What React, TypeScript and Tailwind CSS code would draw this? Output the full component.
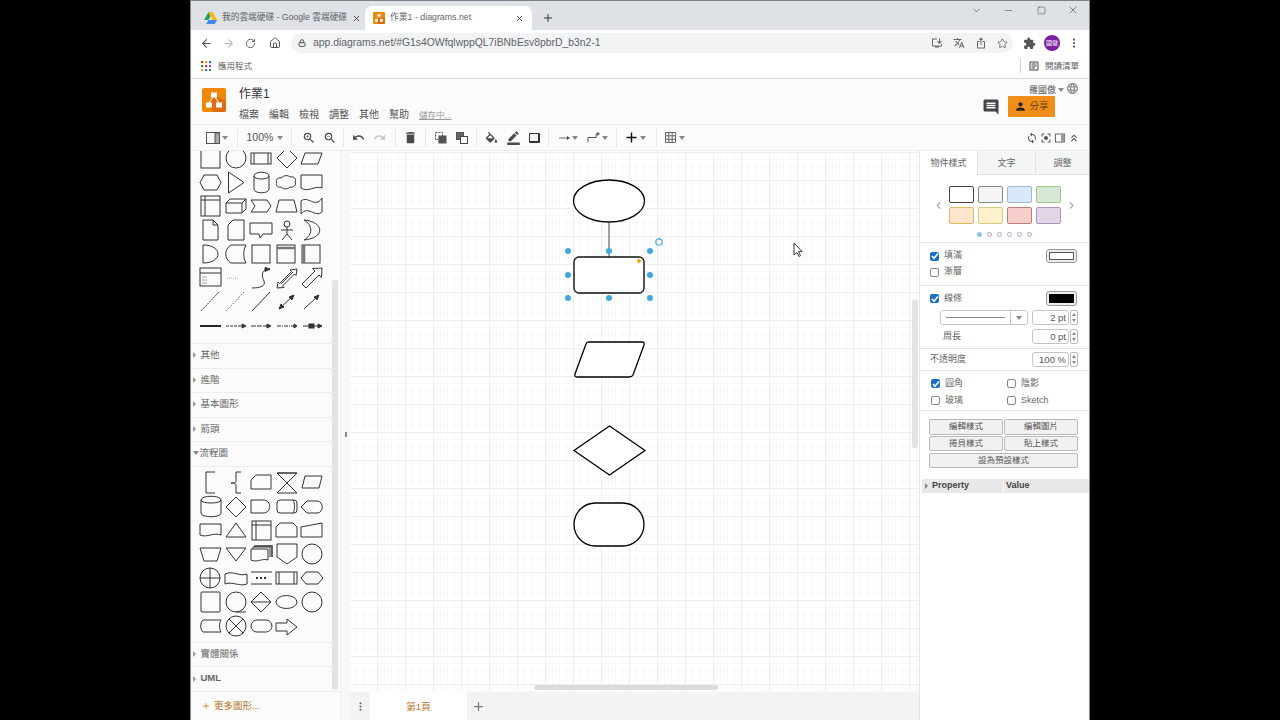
import React from "react";
import {
  ArrowLeft, ArrowRight, RotateCw, Home, Lock, Star, MoreVertical, Minus, Square, X, ChevronDown, Plus,
  ChevronLeft, ChevronRight,
} from "lucide-react";
import {
  MdZoomIn, MdZoomOut, MdUndo, MdRedo, MdDelete, MdFormatColorFill, MdBorderColor,
  MdPerson, MdComment, MdExtension, MdOutlineIosShare, MdAdd, MdLanguage, MdSync, MdCenterFocusStrong, MdKeyboardDoubleArrowUp,
  MdTranslate, MdOutlineInstallDesktop, MdOutlineArticle,
} from "react-icons/md";

const S = { fill: "none", stroke: "#333", strokeWidth: 1 } as const;

function Caret({ className = "" }: { className?: string }) {
  return <span className={`inline-block w-0 h-0 shrink-0 border-x-[3.5px] border-x-transparent border-t-[4px] border-t-[#888] mx-[0.5px] ${className}`} />;
}
function Sep({ className = "" }: { className?: string }) {
  return <span className={`w-px h-[18px] bg-[#e8e8e8] shrink-0 ${className}`} />;
}
function TB({ children, className = "" }: { children: React.ReactNode; className?: string }) {
  return <span className={`w-[21px] h-5 flex items-center justify-center text-[#4a4a4a] shrink-0 ${className}`}>{children}</span>;
}
function Logo({ size }: { size: number }) {
  return (
    <svg width={size} height={size} viewBox="0 0 24 24">
      <rect width="24" height="24" rx="2" fill="#f08705" />
      <path d="M24 13v9a2 2 0 0 1-2 2H12l-6-6 6-11z" fill="#df6c0c" />
      <g fill="#fff" stroke="#fff" strokeWidth="1">
        <rect x="9.5" y="5" width="5" height="4" />
        <rect x="4.5" y="15" width="5" height="4" />
        <rect x="14.5" y="15" width="5" height="4" />
        <path d="M11 9l-4 6M13 9l4 6" fill="none" />
      </g>
    </svg>
  );
}
function Cb({ on, className = "" }: { on?: boolean; className?: string }) {
  return on ? (
    <span className={`w-[9px] h-[9px] rounded-[2px] bg-[#1a6fc4] flex items-center justify-center shrink-0 ${className}`}>
      <svg width="8" height="8" viewBox="0 0 8 8"><path d="M1 4l2 2.2L7 1.5" fill="none" stroke="#fff" strokeWidth="1.6" /></svg>
    </span>
  ) : (
    <span className={`w-[9px] h-[9px] rounded-[2px] bg-white border border-[#888] shrink-0 ${className}`} />
  );
}
function Spin() {
  return (
    <span className="w-[8px] h-[15px] ml-px flex flex-col border border-[#bbb] rounded-[2px] items-center justify-around bg-white">
      <span className="w-0 h-0 border-x-[2.5px] border-x-transparent border-b-[3px] border-b-[#888]" />
      <span className="w-0 h-0 border-x-[2.5px] border-x-transparent border-t-[3px] border-t-[#888]" />
    </span>
  );
}
function Num({ v }: { v: string }) {
  return (
    <span className="flex items-center ml-auto">
      <span className="w-[37px] h-[15px] border border-[#c4c4c4] rounded-[3px] bg-white text-right pr-[2px] text-[9.5px] leading-[13px] text-[#555]">{v}</span>
      <Spin />
    </span>
  );
}
function Tri() {
  return <span className="w-0 h-0 border-y-[3px] border-y-transparent border-l-[3.5px] border-l-[#999] ml-[1px] mr-[4.5px]" />;
}
function Row({ label, open }: { label: string; open?: boolean }) {
  return (
    <div className="h-[24.5px] pb-[1px] border-t border-[#ececec] flex items-center pl-[1px] text-[9.5px] text-[#666]">
      {open ? <Caret className="mr-[1px]" /> : <Tri />}
      <span>{label}</span>
    </div>
  );
}
function PBtn({ children, className = "" }: { children: React.ReactNode; className?: string }) {
  return <span className={`h-[15px] border border-[#b8b8b8] rounded-[2px] bg-[#f1f1f1] text-[8.5px] leading-[13px] text-center text-[#555] ${className}`}>{children}</span>;
}
function Swatch({ c }: { c: string }) {
  return <span className={`h-[17px] w-[25px] rounded-[2px] border ${c}`} />;
}

function TopShapes() {
  return (
    <svg width="141" height="192" viewBox="191 151 141 192" className="block">
      <g {...S}>
        <rect x="201" y="140" width="19" height="28" />
        <circle cx="236" cy="158" r="10" />
        <rect x="251" y="153" width="20" height="11" /><path d="M254 153v11M268 153v11" />
        <path d="M287 148l10 10-10 10-10-10z" />
        <path d="M305 153h17l-4 11h-17z" />
        <path d="M204 175h13l4 7.5-4 7.5h-13l-4-7.5z" />
        <path d="M228.500 172l15.500 10.500-15.500 10.500z" />
        <path d="M254 176c0-5 15-5 15 0v13c0 5-15 5-15 0zM254 176c0 4 15 4 15 0" />
        <path d="M281 178c3-3 7-3 9-1 4-1 7 2 5 5 2 3-2 6-5 5-3 3-8 2-9 0-4 1-6-3-4-4-2-3 1-6 4-5z" />
        <path d="M301 175h21v13c-7-3-14 5-21 0z" />
        <rect x="201" y="196" width="19" height="20" /><path d="M201 200h19M205 196v20" />
        <path d="M226 203l4-4h16v10l-4 4h-16zM226 203h16v10M242 203l4-4" />
        <path d="M251 200h16l4 6-4 6h-16l4-6z" />
        <path d="M279 200h15l3 12h-21z" />
        <path d="M301 201c7-6 14 8 21-3v14c-7 6-14-7-21 2z" />
        <path d="M203 220h10l5 5v15h-15zM213 220v5h5" />
        <path d="M233 220h11v20h-16v-15z" />
        <path d="M250 223h22v11h-9l-3 4-1-4h-9z" />
        <circle cx="287" cy="224" r="3" /><path d="M287 227v7M281 230h12M287 234l-5 6M287 234l5 6" />
        <path d="M304 220c21 2 21 18 0 20 9-5 9-15 0-20z" />
        <path d="M203 245c20 0 20 18 0 18z" />
        <path d="M231 245h15c-3 5-3 13 0 18h-15c-7-4-7-14 0-18z" />
        <rect x="252" y="245" width="18" height="18" />
        <rect x="277" y="245" width="18" height="18" /><path d="M277 248h18" strokeWidth="2.500" stroke="#777" />
        <rect x="302" y="245" width="18" height="18" /><path d="M304 245v18" strokeWidth="2.500" stroke="#777" />
        <rect x="200" y="268" width="21" height="18" /><path d="M200 273h21" />
        <path d="M202 277h5M202 280h5M202 283h5" stroke="#888" strokeWidth=".7" />
        <path d="M227 278h12" stroke="#aaa" strokeWidth="1" strokeDasharray="1 1" />
        <path d="M252 288c8 0 14-2 12-7-2-4-3-10 2-11l4-1" />
        <path d="M270 269l-5-1.500v4z" fill="#333" />
        <path d="M277 288l1-6 1.500 1.500 12-12-1.500-1.500 7-1-1 6.500-1.500-1.500-12 12 1.500 1.500zM281 284l12-12" />
        <path d="M302 284l13-13-2.500-2.500 9.500-.5-.5 9.500-2.500-2.500-13 13z" />
        <path d="M201 311l18-19" strokeDasharray="2 1" />
        <path d="M226 311l18-19" strokeDasharray="1 1.500" />
        <path d="M252 311l18-19" />
        <path d="M279 309l15-14M279 309l2-5 3 3zM294 295l-2 5-3-3z" fill="#333" />
        <path d="M304 309l15-14M319 295l-2 5-3-3z" fill="#333" />
        <path d="M200 326h21" strokeWidth="1.800" stroke="#111" />
        <path d="M226 326h18" strokeDasharray="3 1" /><path d="M246 326l-4-2v4z" fill="#333" />
        <path d="M251 326h19" strokeDasharray="5 1" /><path d="M271 326l-4-2v4z" fill="#333" />
        <path d="M277 326h18" strokeDasharray="4 1 1 1" /><path d="M297 326l-3-2v4z" fill="#333" />
        <path d="M303 326h19" /><rect x="309" y="324" width="5" height="4" fill="#333" /><path d="M322 326l-4-2v4z" fill="#333" />
      </g>
    </svg>
  );
}
function FlowShapes() {
  return (
    <svg width="141" height="175" viewBox="191 467 141 175" className="block">
      <g {...S}>
        <path d="M215 472h-9v21h9" />
        <path d="M241 472h-5v9c0 1.500-1 2-5 2 4 0 5 .5 5 2v8h5" />
        <path d="M256 475h15v14h-20v-9z" />
        <path d="M277 473h20l-20 20h20z" /><path d="M277 473h20" />
        <path d="M305 476h17l-3 12h-17z" />
        <path d="M201 500c0-5 20-5 20 0v13c0 5-20 5-20 0zM201 500c0 4 20 4 20 0" />
        <path d="M236 497l10 10-10 10-10-10z" />
        <path d="M251 500h12c9 0 9 13 0 13h-12z" />
        <rect x="277" y="500" width="20" height="13" rx="3" /><path d="M293 500c2 3 2 10 0 13" />
        <path d="M301 507l6-6h10c7 0 7 12 0 12h-10z" />
        <path d="M200 524h21v11c-7-3-14 3-21 0z" />
        <path d="M236 523l10 14h-20z" />
        <rect x="252" y="521" width="19" height="19" /><path d="M252 525h19M256 521v19" />
        <path d="M280 523h13l4 4v10h-21v-10z" />
        <path d="M301 527l21-4v14h-21z" />
        <path d="M200 548h21l-4 13h-13z" />
        <path d="M226 548h20l-10 13z" />
        <path d="M251 549h17v11c-6-2-11 3-17 0zM253 549v-2h17v10" /><path d="M255 547v-1h17v11" strokeWidth="1.500" />
        <path d="M277 544h20v13l-10 7-10-7z" />
        <circle cx="312" cy="554" r="10" />
        <circle cx="210" cy="578" r="10" /><path d="M200 578h20M210 568v20" />
        <path d="M225 574c8-4 14 3 22 0v10c-8 3-14-3-22 0z" />
        <path d="M251 572h21M251 584h21" />
        <path d="M256 578h2M260 578h2M264 578h2" strokeWidth="2" />
        <rect x="276" y="572" width="21" height="12" /><path d="M279 572v12M294 572v12" />
        <path d="M306 572h12l5 6-5 6h-12l-5-6z" />
        <rect x="201" y="592" width="19" height="20" rx="1" />
        <circle cx="236" cy="602" r="10" /><path d="M236 612h10" />
        <path d="M261 592l10 10-10 10-10-10zM251 602h20" />
        <ellipse cx="286.500" cy="602" rx="10.500" ry="6.500" />
        <circle cx="312" cy="602" r="10" />
        <path d="M203 620h18c-2 4-2 8 0 12h-18c-3-2-3-10 0-12z" />
        <circle cx="236" cy="626" r="10" /><path d="M229 619l14 14M243 619l-14 14" />
        <rect x="251" y="620" width="21" height="12" rx="6" />
        <path d="M276 623h11v-4l10 8-10 8v-4h-11z" />
      </g>
    </svg>
  );
}
function Diagram() {
  return (
    <svg width="570" height="541" viewBox="350 151 570 541" className="absolute left-0 top-0">
      <g fill="#fff" stroke="#000" strokeWidth="1.300">
        <ellipse cx="609" cy="201" rx="35.500" ry="21" />
        <path d="M609 222v35" fill="none" stroke="#444" strokeWidth="1" />
        <rect x="574" y="257" width="70" height="36" rx="5" />
        <rect x="574" y="257" width="70" height="36" rx="5" fill="none" stroke="#555" strokeDasharray="2 1" />
        <path d="M589 342h53c2 0 2.500 1 2 3l-11 30c-1 2-2 2-4 2h-52c-2 0-2.500-1-2-3l11-30c1-2 1-2 3-2z" />
        <path d="M609.500 426l35.500 24.500-35.500 24.500-35.500-24.500z" />
        <rect x="574" y="503" width="70" height="43" rx="21.500" />
      </g>
      <g fill="#3fa9dc">
        {[568, 609, 650].flatMap((x) => [251, 275, 298].filter((y) => !(x === 609 && y === 275)).map((y) => <circle key={`${x}${y}`} cx={x} cy={y} r="3" />))}
      </g>
      <path d="M639 258.500l2.500 2.500-2.500 2.500-2.500-2.500z" fill="#f2a60c" />
      <circle cx="659" cy="242" r="3.200" fill="none" stroke="#52b2e0" strokeWidth="1.300" />
      <path d="M659 237.500l2 1.500-2 1.500z" fill="#52b2e0" />
      <path d="M794 243v12l3-2.500 2 4 1.500-.8-2-4 3.500-.2z" fill="#fff" stroke="#222" strokeWidth=".9" />
    </svg>
  );
}

export default function App() {
  return (
    <div className="w-[1280px] h-[720px] bg-black overflow-hidden flex justify-center font-['Liberation_Sans','Noto_Sans_CJK_TC',sans-serif]">
      <div className="w-[900px] h-[720px] bg-white flex flex-col border-x border-[#7f8a8c] text-[#444]">
        {/* tab strip */}
        <div className="h-[30px] bg-[#dee1e6] border-t border-[#7d8288] flex items-end relative shrink-0">
          <div className="w-[167px] ml-[6px] h-[24px] flex items-center pl-[7px] text-[#5f6368] text-[8.7px] whitespace-nowrap">
            <svg width="13" height="12" viewBox="0 0 13 12" className="shrink-0">
              <path d="M4.300 0h4.400l-4.300 7.500H0z" fill="#1ea362" transform="translate(0 .500)" />
              <path d="M4.400 8h8.600l-2.200 4H2.200z" fill="#4285f4" />
              <path d="M8.700.500L13 8H8.600L4.400.500z" fill="#ffba00" />
            </svg>
            <span className="ml-[5px] w-[126px]">我的雲端硬碟 - Google 雲端硬碟</span>
            <X size={9} strokeWidth={2.500} className="ml-[4px] text-[#444]" />
          </div>
          <div className="w-[167px] h-[24px] bg-white rounded-t-[7px] flex items-center pl-[8px] ml-[1px] text-[#5f6368] text-[8.8px]">
            <Logo size={12} />
            <span className="ml-[5px] w-[125px]">作業1 - diagrams.net</span>
            <X size={9} strokeWidth={2.500} className="text-[#444]" />
          </div>
          <Plus size={12} strokeWidth={2} className="ml-[10px] mb-[6px] text-[#333]" />
          <div className="ml-auto self-start flex items-center mt-[3px] text-[#444]">
            <ChevronDown size={11} strokeWidth={1.300} className="mr-[21px]" />
            <Minus size={11} strokeWidth={1.200} className="mr-[23px]" />
            <Square size={9} strokeWidth={1.400} className="mr-[21px]" />
            <X size={12} strokeWidth={1.200} className="mr-[10px]" />
          </div>
        </div>
        {/* address bar */}
        <div className="h-[24px] pt-[2px] flex items-center shrink-0 text-[#555]">
          <ArrowLeft size={13} strokeWidth={2} className="ml-[9px]" />
          <ArrowRight size={13} strokeWidth={2} className="ml-[9px] text-[#b9bcc0]" />
          <RotateCw size={11} strokeWidth={2} className="ml-[10px]" />
          <Home size={12} strokeWidth={2} className="ml-[13px]" />
          <div className="ml-[10px] w-[722px] h-[20px] rounded-full bg-[#f1f3f4] flex items-center pl-[7px]">
            <Lock size={8} strokeWidth={3} />
            <span className="ml-[7px] text-[10.4px] text-[#5f6368]">app.diagrams.net/#G1s4OWfqlwppQL7iBNbEsv8pbrD_b3n2-1</span>
            <span className="ml-auto flex items-center gap-[10px] pr-[5px] text-[#666]">
              <MdOutlineInstallDesktop size={12} />
              <MdTranslate size={12} />
              <MdOutlineIosShare size={12} />
              <Star size={11} strokeWidth={1.500} className="text-[#444]" />
            </span>
          </div>
          <MdExtension size={13} className="ml-[10px] text-[#555]" />
          <span className="ml-[8px] w-[16px] h-[16px] rounded-full bg-[#7b1fa2] text-white text-[6px] flex items-center justify-center">國傲</span>
          <MoreVertical size={12} strokeWidth={2.500} className="ml-[8px]" />
        </div>
        {/* bookmarks */}
        <div className="h-[25px] flex items-center border-b border-[#dadce0] shrink-0 text-[8.5px] text-[#5f6368]">
          <svg width="10" height="10" viewBox="0 0 10 10" className="ml-[10px]">
            {[0, 1, 2].flatMap((r) => [0, 1, 2].map((c) => (
              <rect key={`${r}${c}`} x={c * 4} y={r * 4} width="2.200" height="2.200" fill={["#d93025", "#f29900", "#1a73e8", "#1e8e3e", "#d93025", "#a142f4", "#f29900", "#1a73e8", "#1e8e3e"][r * 3 + c]} />
            )))}
          </svg>
          <span className="ml-[7px]">應用程式</span>
          <span className="ml-auto w-px h-[14px] bg-[#d0d0d0]" />
          <MdOutlineArticle size={12} className="ml-[7px] text-[#444]" />
          <span className="ml-[5px] mr-[10px]">閱讀清單</span>
        </div>
        {/* app header */}
        <div className="h-[45px] bg-[#fbfbfb] flex shrink-0 relative">
          <div className="ml-[11px] mt-[9px]"><Logo size={24} /></div>
          <div className="ml-[13px]">
            <div className="text-[12px] leading-[16px] mt-[7px] text-[#333]">作業1</div>
            <div className="flex items-center gap-[10px] text-[10px] leading-[14px] mt-[6px] text-[#555]">
              <span>檔案</span><span>編輯</span><span>檢視</span><span>調整</span><span>其他</span><span>幫助</span>
              <span className="text-[8.5px] text-[#999] underline">儲存中...</span>
            </div>
          </div>
          <div className="ml-auto flex flex-col items-end pr-[10px] pt-[5px]">
            <div className="flex items-center text-[9px] leading-[12px] text-[#555]">
              <span>羅國傲</span><Caret className="ml-[2px] mr-[2px]" /><MdLanguage size={13} className="text-[#888] -mt-[4px]" />
            </div>
            <div className="flex items-center mr-[24px]">
              <MdComment size={18} className="text-[#444] mr-[8px] mt-[1px]" />
              <span className="w-[47px] h-[21px] bg-[#f08e1a] rounded-[1px] flex items-center justify-center text-[9.5px] text-[#6b3f08]">
                <MdPerson size={13} className="text-[#222] mr-[2px]" />分享
              </span>
            </div>
          </div>
        </div>
        {/* toolbar */}
        <div className="h-[27px] bg-[#fbfbfb] border-y border-[#ececec] flex items-center shrink-0 pl-[15px] pr-[9px]">
          <svg width="14" height="14" viewBox="0 0 14 14"><rect x=".5" y="1.500" width="13" height="11" fill="none" stroke="#555" /><rect x="9" y="2" width="4.500" height="10.500" fill="#aaa" stroke="#555" /></svg>
          <Caret className="ml-[2px]" />
          <Sep className="ml-[8px]" />
          <span className="ml-[9px] w-[25px] text-[10.5px] text-[#555]">100%</span>
          <Caret className="ml-[5px]" />
          <Sep className="ml-[8px]" />
          <TB className="ml-[6px]"><MdZoomIn size={14} /></TB>
          <TB><MdZoomOut size={14} /></TB>
          <Sep className="ml-[3px]" />
          <TB className="ml-[4px]"><MdUndo size={13} /></TB>
          <TB className="text-[#c4c4c4]"><MdRedo size={13} /></TB>
          <Sep className="ml-[5px]" />
          <TB className="ml-[4px]"><MdDelete size={15} /></TB>
          <Sep className="ml-[4px]" />
          <TB className="ml-[4px]">
            <svg width="12" height="12" viewBox="0 0 12 12"><path d="M.5.5h7v7h-7z" fill="none" stroke="#555" strokeDasharray="2 1" /><rect x="3.500" y="3.500" width="8" height="8" fill="#555" /></svg>
          </TB>
          <TB>
            <svg width="12" height="12" viewBox="0 0 12 12"><rect x=".5" y=".5" width="7" height="7" fill="#666" stroke="#555" /><rect x="4.500" y="4.500" width="7" height="7" fill="#fff" stroke="#444" /></svg>
          </TB>
          <Sep className="ml-[4px]" />
          <TB className="ml-[4px]"><span className="h-[11px] overflow-hidden block"><MdFormatColorFill size={15} /></span></TB>
          <TB className="ml-px"><MdBorderColor size={15} /></TB>
          <TB><span className="w-[11px] h-[10px] border border-[#333] border-r-2 border-b-2 rounded-[1px] bg-[#f4f4f4]" /></TB>
          <Sep className="ml-[3px]" />
          <svg width="11" height="8" viewBox="0 0 14 10" className="ml-[10px]"><path d="M0 5h10" stroke="#444" /><path d="M14 5l-4-2.500v5z" fill="#444" /></svg>
          <Caret className="ml-[2px]" />
          <svg width="13" height="11" viewBox="0 0 14 12" className="ml-[8px]"><path d="M1 11V6h9V2h1" fill="none" stroke="#444" /><path d="M14 2l-3-2v4z" fill="#444" /></svg>
          <Caret className="ml-[2px]" />
          <Sep className="ml-[8px]" />
          <TB className="ml-[4px] text-[#111]"><MdAdd size={17} /></TB>
          <Caret className="-ml-[2px]" />
          <Sep className="ml-[9px]" />
          <TB className="ml-[3px]">
            <svg width="11" height="11" viewBox="0 0 11 11"><path d="M.5.5h10v10H.5zM.5 3.800h10M.5 7.200h10M3.800.5v10M7.200.5v10" fill="none" stroke="#666" /></svg>
          </TB>
          <Caret className="-ml-[2px]" />
          <span className="ml-auto flex items-center gap-[2px] text-[#555]">
            <MdSync size={12} />
            <MdCenterFocusStrong size={12} />
            <svg width="12" height="12" viewBox="0 0 12 12"><rect x="1.500" y="2" width="9" height="8" fill="none" stroke="#666" /><rect x="7" y="2" width="3.500" height="8" fill="#999" /></svg>
            <MdKeyboardDoubleArrowUp size={12} />
          </span>
        </div>
        {/* body */}
        <div className="flex-1 flex min-h-0">
          {/* sidebar */}
          <div className="w-[149px] flex bg-[#fbfbfb] shrink-0">
            <div className="w-[141px] shrink-0 flex flex-col">
              <TopShapes />
              <Row label="其他" />
              <Row label="進階" />
              <Row label="基本圖形" />
              <Row label="箭頭" />
              <Row label="流程圖" open />
              <div className="border-t border-[#ececec]"><FlowShapes /></div>
              <Row label="實體關係" />
              <div className="h-[25px] pb-[1px] border-t border-[#ececec] flex items-center pl-[1px] text-[9.5px] font-bold text-[#666]">
                <Tri />
                <span>UML</span>
              </div>
              <div className="flex-1 border-t border-[#ececec] w-[149px] flex items-center pl-[10px] text-[9.5px] text-[#b7752a]">
                <MdAdd size={10} className="text-[#d98a2c]" /><span className="ml-[3px]">更多圖形...</span>
              </div>
            </div>
            <div className="w-[8px] shrink-0">
              <div className="w-[6px] h-[410px] mt-[129px] bg-[#e4e4e4] rounded-[2px]" />
            </div>
          </div>
          {/* splitter */}
          <div className="w-[10px] bg-[#f8f8f8] flex items-center justify-center shrink-0 border-l border-[#f0f0f0]">
            <span className="w-[2px] h-[5px] bg-[#888] mb-[2px]" />
          </div>
          {/* canvas column */}
          <div className="w-[569px] flex flex-col shrink-0">
            <div className="flex-1 relative overflow-hidden bg-white bg-[image:linear-gradient(#eeeeee_1px,transparent_1px),linear-gradient(90deg,#eeeeee_1px,transparent_1px),linear-gradient(#f8f8f8_1px,transparent_1px),linear-gradient(90deg,#f8f8f8_1px,transparent_1px)] bg-[size:28px_28px,28px_28px,7px_7px,7px_7px] bg-[position:27px_1px,27px_1px,6px_1px,6px_1px]">
              <Diagram />
              <div className="absolute left-[562px] top-[149px] w-[6px] h-[148px] bg-[#e4e4e4] rounded-[2px]" />
              <div className="absolute left-[184px] top-[534px] w-[184px] h-[5px] bg-[#dcdcdc] rounded-[2px]" />
            </div>
            <div className="h-[28px] bg-[#f1f3f4] flex items-center shrink-0">
              <span className="w-[20px] flex justify-center text-[#666]"><MoreVertical size={11} strokeWidth={2.500} /></span>
              <span className="w-[97px] h-full bg-white flex items-center justify-center text-[9.5px] text-[#b7752a] pt-[3px]">第1頁</span>
              <MdAdd size={15} className="ml-[4px] text-[#777]" />
            </div>
          </div>
          {/* right panel */}
          <div className="flex-1 bg-white border-l border-[#e6e6e6] flex flex-col text-[9px] text-[#666] min-w-0">
            <div className="h-[24px] flex shrink-0">
              <span className="w-[57px] flex items-center justify-center bg-white pt-[2px]">物件樣式</span>
              <span className="w-[58px] flex items-center justify-center bg-[#f4f5f5] border-b border-[#e0e0e0] border-l pt-[2px]">文字</span>
              <span className="flex-1 flex items-center justify-center bg-[#f4f5f5] border-b border-[#e0e0e0] border-l pt-[2px]">調整</span>
            </div>
            <div className="h-[68px] border-b border-[#e4e4e4] flex flex-col items-center pt-[11px] shrink-0">
              <div className="flex items-center">
                <ChevronLeft size={11} strokeWidth={2.500} className="text-[#aaa] mr-[5px]" />
                <div className="grid grid-cols-4 gap-x-[4px] gap-y-[4px]">
                  <Swatch c="bg-white border-[#444]" />
                  <Swatch c="bg-[#f5f5f5] border-[#888]" />
                  <Swatch c="bg-[#dae8fc] border-[#9fb6d6]" />
                  <Swatch c="bg-[#d5e8d4] border-[#a3c48d]" />
                  <Swatch c="bg-[#ffe6cc] border-[#dfb860]" />
                  <Swatch c="bg-[#fff2cc] border-[#dcc886]" />
                  <Swatch c="bg-[#f8cecc] border-[#c17d7a]" />
                  <Swatch c="bg-[#e1d5e7] border-[#ab94b8]" />
                </div>
                <ChevronRight size={11} strokeWidth={2.500} className="text-[#aaa] ml-[5px]" />
              </div>
              <div className="flex gap-[5px] mt-[8px]">
                <span className="w-[5px] h-[5px] rounded-full bg-[#8fc4e0]" />
                {[0, 1, 2, 3, 4].map((i) => <span key={i} className="w-[5px] h-[5px] rounded-full border border-[#aac]" />)}
              </div>
            </div>
            <div className="h-[43px] border-b border-[#e4e4e4] pl-[10px] pr-[12px] pt-[5px] shrink-0">
              <div className="h-[16px] flex items-center">
                <Cb on /><span className="ml-[5px]">填滿</span>
                <span className="ml-auto w-[31px] h-[14px] border border-[#999] rounded-[3px] p-[2px] bg-[#eee]"><span className="block w-full h-full bg-white border border-[#555]" /></span>
              </div>
              <div className="h-[16px] flex items-center"><Cb /><span className="ml-[5px]">漸層</span></div>
            </div>
            <div className="h-[63px] border-b border-[#e4e4e4] pl-[10px] pr-[11px] pt-[5px] shrink-0">
              <div className="h-[15px] flex items-center">
                <Cb on /><span className="ml-[5px]">線條</span>
                <span className="ml-auto w-[31px] h-[15px] border border-[#999] rounded-[3px] p-[2px] bg-[#eee] mr-px"><span className="block w-full h-full bg-black" /></span>
              </div>
              <div className="h-[19px] flex items-center mt-[2px]">
                <span className="ml-[10px] w-[88px] h-[15px] border border-[#c4c4c4] rounded-[3px] flex items-center bg-white">
                  <span className="ml-[5px] w-[59px] h-px bg-[#888]" />
                  <span className="ml-[5px] w-px h-full bg-[#c4c4c4]" />
                  <Caret className="ml-[5px]" />
                </span>
                <Num v="2 pt" />
              </div>
              <div className="h-[19px] flex items-center">
                <span className="ml-[13px]">周長</span>
                <Num v="0 pt" />
              </div>
            </div>
            <div className="h-[22px] border-b border-[#e4e4e4] pl-[10px] pr-[11px] flex items-center shrink-0">
              <span>不透明度</span><Num v="100 %" />
            </div>
            <div className="h-[40px] border-b border-[#e4e4e4] pl-[11px] grid grid-cols-[76px_1fr] auto-rows-[17px] items-center pt-[4px] shrink-0">
              <span className="flex items-center"><Cb on /><span className="ml-[5px]">圓角</span></span>
              <span className="flex items-center"><Cb /><span className="ml-[5px]">陰影</span></span>
              <span className="flex items-center"><Cb /><span className="ml-[5px]">玻璃</span></span>
              <span className="flex items-center"><Cb /><span className="ml-[5px]">Sketch</span></span>
            </div>
            <div className="h-[68px] pl-[9px] pr-[11px] pt-[8px] grid grid-cols-2 gap-x-[1px] gap-y-[1px] content-start shrink-0">
              <PBtn className="h-[16px]">編輯樣式</PBtn>
              <PBtn className="h-[16px]">編輯圖片</PBtn>
              <PBtn>捲貝樣式</PBtn>
              <PBtn>貼上樣式</PBtn>
              <PBtn className="col-span-2 mt-px">設為預設樣式</PBtn>
            </div>
            <div className="h-[14px] ml-[2px] flex font-bold text-[9px] text-[#444] shrink-0">
              <span className="w-[81px] bg-[#e8e8e8] flex items-center pl-[3px]">
                <span className="w-0 h-0 border-y-[3px] border-y-transparent border-l-[3px] border-l-[#888] mr-[4px]" />Property
              </span>
              <span className="flex-1 ml-px bg-[#e8e8e8] flex items-center pl-[2px]">Value</span>
            </div>
          </div>
        </div>
      </div>
    </div>
  );
}
